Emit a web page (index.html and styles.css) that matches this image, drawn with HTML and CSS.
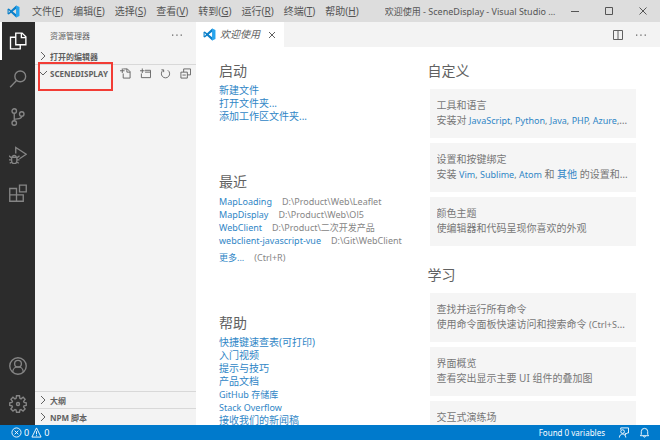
FILE: index.html
```html
<!DOCTYPE html>
<html lang="zh-CN">
<head>
    <meta charset="UTF-8">
    <meta name="viewport" content="width=device-width, initial-scale=1.0">
    <title>欢迎使用 - SceneDisplay - Visual Studio Code</title>
    <link rel="stylesheet" href="styles.css">
</head>
<body>
    <svg width="0" height="0" class="sprite" aria-hidden="true">
        <symbol id="logo" viewBox="0 0 24 24">
            <path fill="#0a7fc9" d="M17 1 7.5 9.8 3.3 6.5 1 7.6v8.8l2.3 1.1 4.2-3.3L17 23l1-1V2zM3 14.6V9.4L5.700 12zM17 17l-6.600-5L17 7z"/>
            <path fill="#27a5ee" d="M17 1l6 2.700v16.600L17 23z"/>
        </symbol>
        <symbol id="chevron-right" viewBox="0 0 10 10"><path d="M3 1l4 4-4 4"/></symbol>
        <symbol id="chevron-down" viewBox="0 0 10 10"><path d="M1 3l4 4 4-4"/></symbol>
        <symbol id="more" viewBox="0 0 12 12"><path class="solid" d="M1 5.500h1.300v1.300H1zM5.300 5.500h1.300v1.300H5.300zM9.600 5.500h1.300v1.300H9.600z"/></symbol>
    </svg>

    <header class="titlebar">
        <svg class="logo"><use href="#logo"/></svg>
        <nav class="menu">
            <button>文件(<u>F</u>)</button>
            <button>编辑(<u>E</u>)</button>
            <button>选择(<u>S</u>)</button>
            <button>查看(<u>V</u>)</button>
            <button>转到(<u>G</u>)</button>
            <button>运行(<u>R</u>)</button>
            <button>终端(<u>T</u>)</button>
            <button>帮助(<u>H</u>)</button>
        </nav>
        <div class="window-title">欢迎使用 - SceneDisplay - Visual Studio Code</div>
        <div class="window-controls">
            <button aria-label="最小化"><svg viewBox="0 0 10 10"><path d="M1 5.500h8"/></svg></button>
            <button aria-label="最大化"><svg viewBox="0 0 10 10"><path d="M1.500 1.500h7v7h-7z"/></svg></button>
            <button aria-label="关闭"><svg viewBox="0 0 10 10"><path d="M1.500 1.500l7 7M8.500 1.500l-7 7"/></svg></button>
        </div>
    </header>

    <div class="workbench">
        <nav class="activity">
            <button class="active" aria-label="资源管理器"><svg viewBox="0 0 24 24"><path d="M9 1.500h8.500l5 5V17H9zM16.500 1.500v6H22.500M9 7H2v15.500h13V17"/></svg></button>
            <button aria-label="搜索"><svg viewBox="0 0 24 24"><circle cx="15" cy="8.500" r="7.200"/><path d="M10 14l-8.500 9"/></svg></button>
            <button aria-label="源代码管理"><svg viewBox="0 0 24 24"><circle cx="7" cy="4" r="3"/><circle cx="7" cy="20" r="3"/><circle cx="17" cy="8" r="3"/><path d="M7 7v10M17 11c0 4-5 3-10 4"/></svg></button>
            <button aria-label="运行"><svg viewBox="0 0 24 24"><path d="M9 10V2l14 9-9 6"/><path d="M3.500 15h7v5a3.500 3.500 0 0 1-7 0zM4.500 15a2.500 2.500 0 0 1 5 0M0 13l3.500 3M14 13l-3.500 3M0 18.500h3.500M10.500 18.500H14M1 23l3-2M13 23l-3-2"/></svg></button>
            <button aria-label="扩展"><svg viewBox="0 0 24 24"><path d="M1 6h9v8.500H1zM1 14.500h9V23H1zM10 14.500h9V23h-9zM14 1.500h9v9h-9z"/></svg></button>
            <span class="spacer"></span>
            <button aria-label="帐户"><svg viewBox="0 0 24 24"><circle cx="12" cy="12" r="11"/><circle cx="12" cy="9" r="4.500"/><path d="M5 20c0-9 14-9 14 0"/></svg></button>
            <button aria-label="管理"><svg viewBox="0 0 24 24"><path d="M10 1h4l.5 3.500 1.500.7 2.900-2.200 2.600 2.700L19.500 8.500l.6 1.400L23 10.300v3.600l-3 .5-.6 1.500 2.100 2.700-2.800 2.800-2.700-2-1.500.6L14 23h-4l-.5-3-1.500-.6-2.700 2-2.800-2.800 2.100-2.700L4 14.400l-3-.5v-3.600l3-.4.600-1.400-2-2.800L5.300 3 8 5.200l1.500-.7z"/><circle cx="12" cy="12" r="2"/></svg></button>
        </nav>

        <aside class="sidebar">
            <div class="sidebar-title">
                <span>资源管理器</span>
                <button aria-label="更多"><svg><use href="#more"/></svg></button>
            </div>
            <div class="section"><svg><use href="#chevron-right"/></svg><span>打开的编辑器</span></div>
            <div class="section project bordered">
                <svg><use href="#chevron-down"/></svg><span>SCENEDISPLAY</span>
                <div class="highlight"></div>
                <div class="section-actions">
                    <button aria-label="新建文件"><svg viewBox="0 0 12 12"><path d="M3.500 1H8l3 3v7H3.500V6M7.500 1v3.500H11M0 3h5M2.500.5v5"/></svg></button>
                    <button aria-label="新建文件夹"><svg viewBox="0 0 12 12"><path d="M5.500 2.500h6v8h-10V6M5.500 4.500h6M0 3h5M2.500.5v5"/></svg></button>
                    <button aria-label="刷新"><svg viewBox="0 0 12 12"><path d="M3.500 2.500a4.500 4.500 0 1 0 5 0M1.500 2h2.500v2.500"/></svg></button>
                    <button aria-label="全部折叠"><svg viewBox="0 0 12 12"><path d="M1 4.500h7v6.500H1zM4 4.500V1h7.500v6.500H8M2.700 7.700h3.600"/></svg></button>
                </div>
            </div>
            <span class="spacer"></span>
            <div class="section bordered"><svg><use href="#chevron-right"/></svg><span>大纲</span></div>
            <div class="section bordered"><svg><use href="#chevron-right"/></svg><span>NPM 脚本</span></div>
        </aside>

        <main class="editor">
            <div class="tabs">
                <div class="tab">
                    <svg class="logo"><use href="#logo"/></svg>
                    <em>欢迎使用</em>
                    <button aria-label="关闭"><svg viewBox="0 0 10 10"><path d="M2 2l6 6M8 2l-6 6"/></svg></button>
                </div>
                <div class="editor-actions">
                    <button aria-label="拆分编辑器"><svg viewBox="0 0 12 12"><path d="M1.500 1.500h9v9h-9zM6 1.500v9"/></svg></button>
                    <button aria-label="更多"><svg><use href="#more"/></svg></button>
                </div>
            </div>
            <div class="welcome">
                <div class="column">
                    <section>
                        <h2>启动</h2>
                        <ul>
                            <li><a href="#">新建文件</a></li>
                            <li><a href="#">打开文件夹...</a></li>
                            <li><a href="#">添加工作区文件夹...</a></li>
                        </ul>
                    </section>
                    <section>
                        <h2>最近</h2>
                        <ul>
                            <li class="small"><a href="#">MapLoading</a><span class="path">D:\Product\Web\Leaflet</span></li>
                            <li class="small"><a href="#">MapDisplay</a><span class="path">D:\Product\Web\Ol5</span></li>
                            <li class="small"><a href="#">WebClient</a><span class="path">D:\Product\二次开发产品</span></li>
                            <li class="small"><a href="#">webclient-javascript-vue</a><span class="path">D:\Git\WebClient</span></li>
                            <li class="small more"><a href="#">更多...</a><span class="path">(Ctrl+R)</span></li>
                        </ul>
                    </section>
                    <section>
                        <h2>帮助</h2>
                        <ul>
                            <li><a href="#">快捷键速查表(可打印)</a></li>
                            <li><a href="#">入门视频</a></li>
                            <li><a href="#">提示与技巧</a></li>
                            <li><a href="#">产品文档</a></li>
                            <li class="small"><a href="#">GitHub 存储库</a></li>
                            <li class="small"><a href="#">Stack Overflow</a></li>
                            <li><a href="#">接收我们的新闻稿</a></li>
                        </ul>
                    </section>
                </div>
                <div class="column cards">
                    <section>
                        <h2>自定义</h2>
                        <div class="card">
                            <h3>工具和语言</h3>
                            <p>安装对 <span class="small"><a href="#">JavaScript</a>, <a href="#">Python</a>, <a href="#">Java</a>, <a href="#">PHP</a>, <a href="#">Azure</a>, <a href="#">Docker</a></span> 和 <a href="#">更多</a> 的支持</p>
                        </div>
                        <div class="card">
                            <h3>设置和按键绑定</h3>
                            <p>安装 <span class="small"><a href="#">Vim</a>, <a href="#">Sublime</a>, <a href="#">Atom</a></span> 和 <a href="#">其他</a> 的设置和快捷键</p>
                        </div>
                        <div class="card">
                            <h3>颜色主题</h3>
                            <p>使编辑器和代码呈现你喜欢的外观</p>
                        </div>
                    </section>
                    <section>
                        <h2>学习</h2>
                        <div class="card">
                            <h3>查找并运行所有命令</h3>
                            <p>使用命令面板快速访问和搜索命令 <span class="small">(Ctrl+Shift+P)</span></p>
                        </div>
                        <div class="card">
                            <h3>界面概览</h3>
                            <p>查看突出显示主要 UI 组件的叠加图</p>
                        </div>
                        <div class="card">
                            <h3>交互式演练场</h3>
                        </div>
                    </section>
                </div>
            </div>
        </main>
    </div>

    <footer class="statusbar">
        <button aria-label="问题">
            <svg viewBox="0 0 12 12"><circle cx="6" cy="6" r="5"/><path d="M4 4l4 4M8 4l-4 4"/></svg>0
            <svg viewBox="0 0 12 12"><path d="M6 1l5 10H1zM6 4.500v3.500M6 9v1"/></svg>0
        </button>
        <span class="spacer"></span>
        <span class="found">Found 0 variables</span>
        <button aria-label="反馈"><svg viewBox="0 0 12 12"><path d="M3 3V1h8.500v5.500H10L8 8.500v-2"/><circle cx="5" cy="5" r="2"/><path d="M1.500 11.500c0-5 7-5 7 0"/></svg></button>
        <button aria-label="通知"><svg viewBox="0 0 12 12"><path d="M1.500 9.500L2.500 8V5a3.500 3.500 0 0 1 7 0v3l1 1.500zM5 10c0 1.500 2 1.500 2 0"/></svg></button>
    </footer>
</body>
</html>
```

FILE: styles.css
```css
* {
    box-sizing: border-box;
}
body {
    margin: 0;
    height: 100vh;
    overflow: hidden;
    display: flex;
    flex-direction: column;
    background: #fff;
    color: #616161;
    font-family: "Noto Sans", "Noto Sans CJK SC", sans-serif;
    font-size: 10px;
    line-height: 13px;
}
.sprite {
    position: absolute;
}
svg {
    display: block;
    flex: none;
    width: 12px;
    height: 12px;
    fill: none;
    stroke: currentColor;
}
.solid {
    fill: currentColor;
    stroke: none;
}
button {
    display: flex;
    align-items: center;
    justify-content: center;
    margin: 0;
    padding: 0;
    border: none;
    background: none;
    color: inherit;
    font: inherit;
    white-space: nowrap;
}
a {
    color: #2f86c6;
    text-decoration: none;
}
h2, h3, p, ul {
    margin: 0;
    padding: 0;
    font-weight: normal;
    list-style: none;
}
.small {
    font-size: 9px;
}
.logo {
    width: 13px;
    height: 13px;
    stroke: none;
}
.spacer {
    flex: 1;
}

/* title bar */
.titlebar {
    display: flex;
    align-items: center;
    flex: none;
    height: 22px;
    padding-left: 7px;
    background: #ddd;
    color: #555;
}
.menu {
    display: flex;
    gap: 10px;
    margin-left: 12px;
}
.menu u {
    text-decoration-thickness: 1px;
}
.window-title {
    flex: 1;
    min-width: 0;
    margin-left: 26px;
    overflow: hidden;
    text-overflow: ellipsis;
    white-space: nowrap;
    font-size: 9px;
}
.window-controls {
    display: flex;
}
.window-controls button {
    width: 34px;
    height: 22px;
}
.window-controls svg {
    width: 10px;
    height: 10px;
}

.workbench {
    display: flex;
    flex: 1;
    min-height: 0;
}

/* activity bar */
.activity {
    display: flex;
    flex-direction: column;
    width: 35px;
    padding-bottom: 2px;
    background: #2c2c2c;
    color: #858585;
}
.activity button {
    height: 38px;
    border-left: 2px solid transparent;
    padding-right: 2px;
}
.activity .active {
    border-color: #fff;
    color: #fff;
}
.activity svg {
    width: 18px;
    height: 18px;
    stroke-width: 1.8;
}

/* side bar */
.sidebar {
    display: flex;
    flex-direction: column;
    width: 161px;
    background: #f3f3f3;
}
.sidebar-title {
    display: flex;
    align-items: center;
    justify-content: space-between;
    height: 26px;
    padding: 0 13px 0 15px;
    font-size: 8px;
}
.section {
    display: flex;
    align-items: center;
    gap: 2px;
    height: 16px;
    padding-left: 3px;
    font-size: 8px;
    font-weight: bold;
}
.section > svg {
    width: 10px;
    height: 10px;
}
.bordered {
    height: 17px;
    border-top: 1px solid #d8d8d8;
}
.project {
    position: relative;
}
.highlight {
    position: absolute;
    top: -3px;
    left: 3px;
    width: 75px;
    height: 29px;
    border: 2px solid #f23c35;
}
.section-actions {
    display: flex;
    gap: 9px;
    margin-left: auto;
    padding-right: 5px;
}
.section-actions svg {
    width: 11px;
    height: 11px;
}

/* editor */
.editor {
    display: flex;
    flex-direction: column;
    flex: 1;
    min-width: 0;
}
.tabs {
    display: flex;
    justify-content: space-between;
    flex: none;
    height: 25px;
    background: #f3f3f3;
}
.tab {
    display: flex;
    align-items: center;
    gap: 4px;
    padding: 0 7px;
    background: #fff;
}
.tab button {
    margin-left: 3px;
}
.tab button svg {
    width: 10px;
    height: 10px;
}
.editor-actions {
    display: flex;
    gap: 11px;
    padding-right: 13px;
}
.welcome {
    display: grid;
    grid-template-columns: 1fr 1fr;
    flex: 1;
    min-height: 0;
    overflow: hidden;
    padding: 14px 24px 0 23px;
}
.column {
    min-width: 0;
}
.column section {
    margin-bottom: 49px;
}
h2 {
    margin-bottom: 3px;
    font-size: 14px;
    line-height: 20px;
}
li {
    height: 13px;
    white-space: nowrap;
}
.more {
    margin-top: 4px;
}
.path {
    margin-left: 10px;
    color: #868686;
}
.cards section {
    margin-bottom: 19px;
}
.cards h2 {
    margin-bottom: 8px;
}
.card {
    margin: 0 0 5px 2px;
    padding: 9px 7px 10px;
    background: #f5f5f5;
    color: #777;
}
.card h3, .card p {
    height: 15px;
    overflow: hidden;
    text-overflow: ellipsis;
    white-space: nowrap;
    font-size: 10px;
    line-height: 15px;
}

/* status bar */
.statusbar {
    display: flex;
    align-items: center;
    flex: none;
    gap: 10px;
    height: 15px;
    padding: 0 10px 0 11px;
    background: #007acc;
    color: #fff;
    font-size: 9px;
}
.statusbar button {
    gap: 2px;
}
.statusbar svg {
    width: 11px;
    height: 11px;
}
.found {
    margin-right: 3px;
    font-size: 8px;
}
```
